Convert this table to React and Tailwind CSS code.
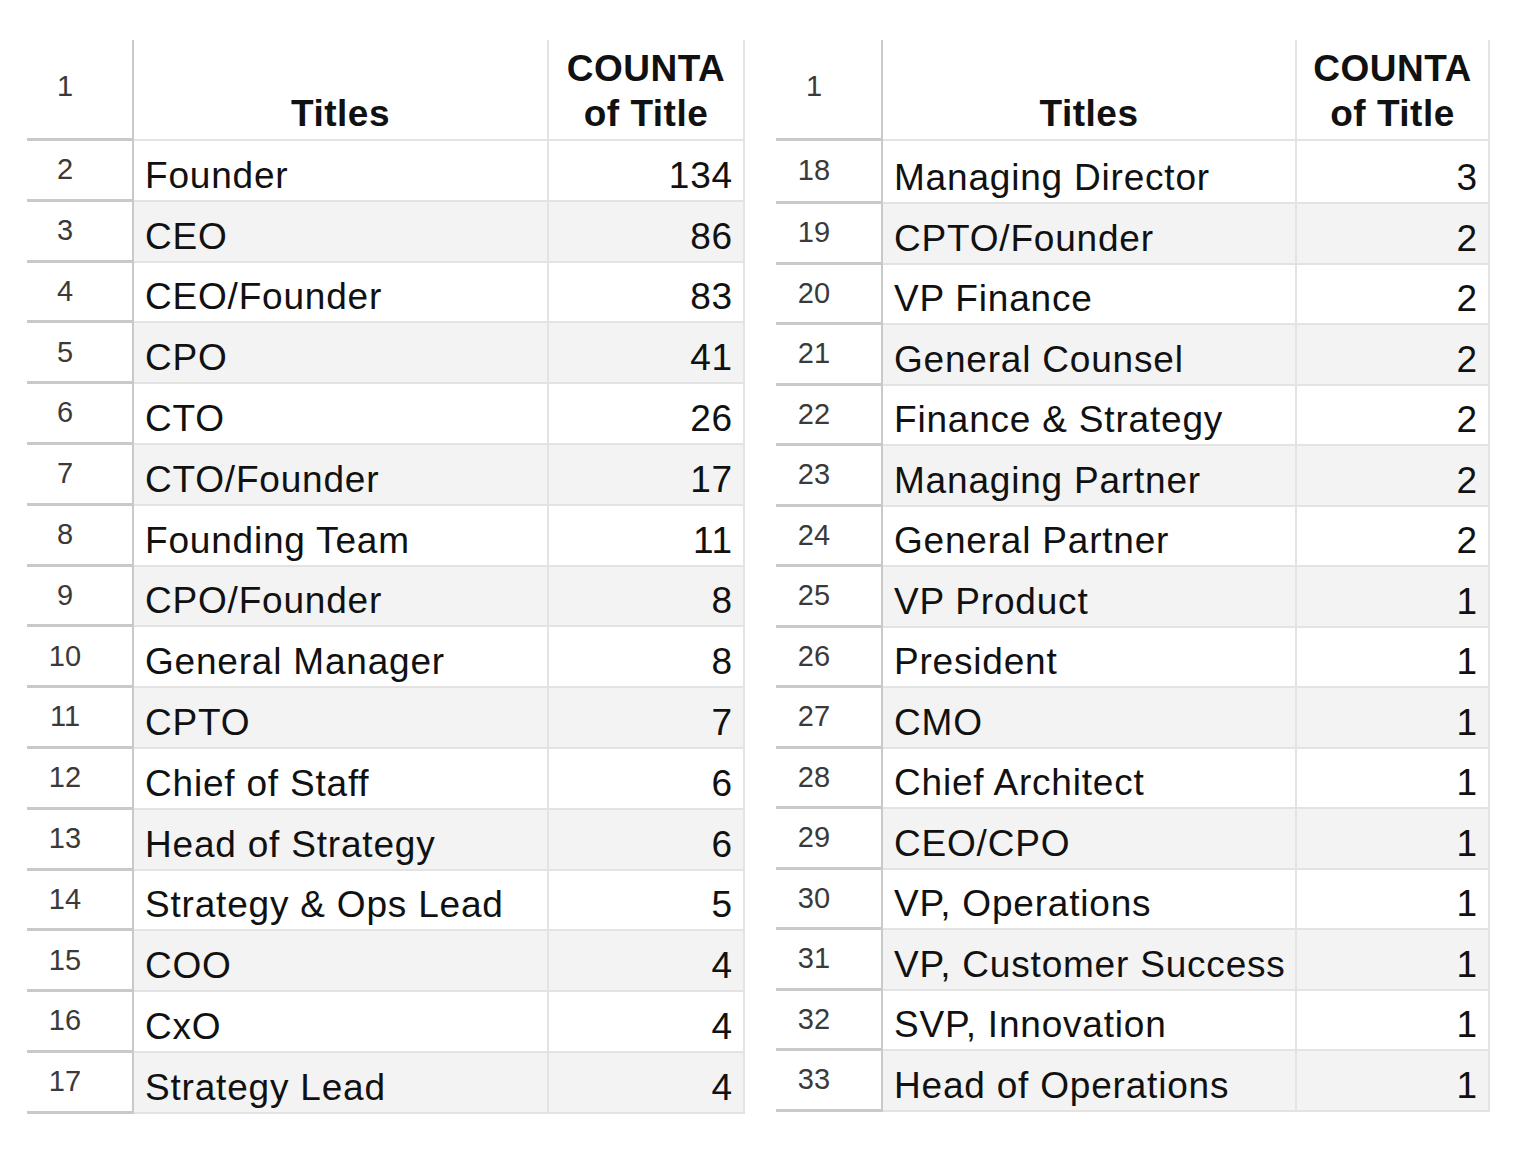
import React from "react";

const left = [
  [2, "Founder", 134],
  [3, "CEO", 86],
  [4, "CEO/Founder", 83],
  [5, "CPO", 41],
  [6, "CTO", 26],
  [7, "CTO/Founder", 17],
  [8, "Founding Team", 11],
  [9, "CPO/Founder", 8],
  [10, "General Manager", 8],
  [11, "CPTO", 7],
  [12, "Chief of Staff", 6],
  [13, "Head of Strategy", 6],
  [14, "Strategy & Ops Lead", 5],
  [15, "COO", 4],
  [16, "CxO", 4],
  [17, "Strategy Lead", 4],
];

const right = [
  [18, "Managing Director", 3],
  [19, "CPTO/Founder", 2],
  [20, "VP Finance", 2],
  [21, "General Counsel", 2],
  [22, "Finance & Strategy", 2],
  [23, "Managing Partner", 2],
  [24, "General Partner", 2],
  [25, "VP Product", 1],
  [26, "President", 1],
  [27, "CMO", 1],
  [28, "Chief Architect", 1],
  [29, "CEO/CPO", 1],
  [30, "VP, Operations", 1],
  [31, "VP, Customer Success", 1],
  [32, "SVP, Innovation", 1],
  [33, "Head of Operations", 1],
];

function Header() {
  return (
    <>
      <div className="h-[101px] border-b-[3px] border-r-2 border-[#c9c9c9] flex items-center justify-center pr-[29px] pb-[4px] text-[29px] text-[#3a3a3a]">
        1
      </div>
      <div className="h-[101px] border-b-2 border-r-2 border-[#e3e3e3] flex items-end justify-center pb-[3px] font-bold text-[37px] leading-[45px] tracking-[0.5px] text-[#111]">
        Titles
      </div>
      <div className="h-[101px] border-b-2 border-r-2 border-[#e3e3e3] flex items-end justify-center pb-[3px] font-bold text-[37px] leading-[45px] tracking-[0.5px] text-[#111] text-center">
        <span>
          COUNTA
          <br />
          of Title
        </span>
      </div>
    </>
  );
}

function Row({ n, title, count, h }) {
  const shaded = n % 2 === 1;
  const bg = shaded ? "bg-[#f3f3f3]" : "bg-white";
  return (
    <>
      <div
        className={
          h +
          " border-b-[3px] border-r-2 border-[#c9c9c9] flex items-center justify-center pr-[29px] text-[29px] text-[#3a3a3a]"
        }
      >
        {n}
      </div>
      <div
        className={
          h +
          " " +
          bg +
          " border-b-2 border-r-2 border-[#e3e3e3] flex items-end pl-[11px] pb-[4px] text-[37px] leading-[40px] tracking-[0.8px] text-[#111] whitespace-nowrap"
        }
      >
        {title}
      </div>
      <div
        className={
          h +
          " " +
          bg +
          " border-b-2 border-r-2 border-[#e3e3e3] flex items-end justify-end pr-[10px] pb-[4px] text-[37px] leading-[40px] tracking-[0.8px] text-[#111]"
        }
      >
        {count}
      </div>
    </>
  );
}

export default function App() {
  return (
    <div className="w-[1536px] h-[1152px] bg-white flex items-start pt-[40px] pl-[27px] gap-[31px] font-['Liberation_Sans',Arial,sans-serif]">
      <div className="grid grid-cols-[107px_415px_196px]">
        <Header />
        {left.map(([n, title, count]) => (
          <Row key={n} n={n} title={title} count={count} h="h-[60.8px]" />
        ))}
      </div>
      <div className="grid grid-cols-[107px_414px_193px]">
        <Header />
        {right.map(([n, title, count], i) => (
          <Row
            key={n}
            n={n}
            title={title}
            count={count}
            h={i === 0 ? "h-[63px]" : "h-[60.5px]"}
          />
        ))}
      </div>
    </div>
  );
}
